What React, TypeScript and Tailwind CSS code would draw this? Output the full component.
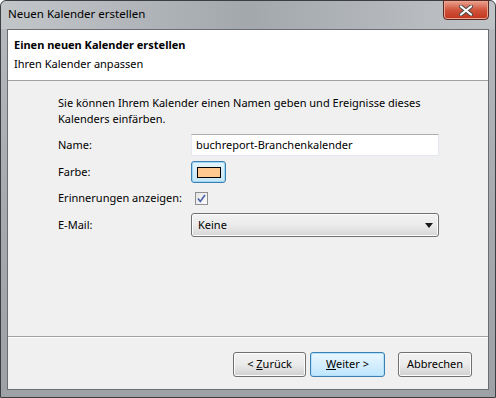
const font = "font-['Segoe_UI','Noto_Sans',sans-serif]";

const WinButton = ({
  children,
  focused,
  className = "",
}: {
  children: React.ReactNode;
  focused?: boolean;
  className?: string;
}) => (
  <button
    className={`h-[25px] rounded-[3px] border text-[11px] text-black ${
      focused
        ? "border-[#3c7fb1] bg-gradient-to-b from-[#eaf6fd] to-[#bee6fd] shadow-[inset_0_0_0_1px_#b4e0fa]"
        : "border-[#707070] bg-gradient-to-b from-[#f2f2f2] via-[#ebebeb] to-[#cfcfcf] shadow-[inset_0_0_0_1px_#fcfcfc]"
    } ${className}`}
  >
    {children}
  </button>
);

export default function App() {
  return (
    <div
      className={`w-[496px] h-[398px] flex flex-col rounded-t-[6px] border border-[#3b3f44] bg-gradient-to-b from-[#b7bbbf] via-[#a7abb0] to-[#9ea2a6] ${font}`}
    >
      {/* title bar */}
      <div className="h-[28px] relative flex items-center pl-[7px] bg-gradient-to-r from-[#c3c6c9] via-[#a3a8ad] to-[#c0c3c6] rounded-t-[6px]">
        <span className="text-[11.5px] text-black -mt-[2px]">
          Neuen Kalender erstellen
        </span>
        <div className="absolute right-[6px] top-[-1px] w-[46px] h-[20px] rounded-b-[4px] border border-[#5a2a24] bg-gradient-to-b from-[#e8a190] via-[#d0533a] to-[#c1351e] shadow-[inset_0_0_0_1px_#eba58f] flex items-center justify-center">
          <svg width="14" height="11" viewBox="0 0 14 11">
            <path
              d="M2 1.5 L12 9.5 M12 1.5 L2 9.5"
              stroke="#4a4a4a"
              strokeWidth="4"
              strokeLinecap="round"
            />
            <path
              d="M2 1.5 L12 9.5 M12 1.5 L2 9.5"
              stroke="#ffffff"
              strokeWidth="2.2"
              strokeLinecap="round"
            />
          </svg>
        </div>
      </div>

      {/* client area */}
      <div className="flex-1 mx-[6px] mb-[7px] border border-[#6a6e72] bg-[#f0f0f0] flex flex-col">
        <div className="h-[51px] bg-white border-b border-[#a0a0a0] pl-[6px] pt-[7px] text-[11px] text-black">
          <div className="font-bold leading-[16px]">
            Einen neuen Kalender erstellen
          </div>
          <div className="leading-[16px] mt-[3px]">Ihren Kalender anpassen</div>
        </div>

        <div className="flex-1 pl-[50px] pt-[14px] text-[11px] text-black">
          <p className="leading-[16px] w-[380px]">
            Sie können Ihrem Kalender einen Namen geben und Ereignisse dieses
            Kalenders einfärben.
          </p>
          <div className="grid grid-cols-[133px_248px] gap-y-[5px] mt-[7px] items-center">
            <span>Name:</span>
            <div className="h-[22px] bg-white border border-[#e3e9ef] border-t-[#abadb3] flex items-center px-[4px]">
              buchreport-Branchenkalender
            </div>

            <span>Farbe:</span>
            <div>
              <div className="w-[35px] h-[22px] rounded-[3px] border border-[#3c7fb1] bg-gradient-to-b from-[#e5f4fc] to-[#c4e5f6] shadow-[inset_0_0_0_1px_#9ed7f6] flex items-center justify-center">
                <div className="w-[24px] h-[11px] bg-[#ffc891] border border-black" />
              </div>
            </div>

            <span>Erinnerungen anzeigen:</span>
            <div className="h-[20px] flex items-center pl-[4px]">
              <div className="w-[13px] h-[13px] border border-[#8f8f8f] bg-gradient-to-br from-[#e6e6e6] to-[#fbfbfb] flex items-center justify-center">
                <svg width="9" height="9" viewBox="0 0 9 9">
                  <path
                    d="M1 4.5 L3.3 7.5 L8 1"
                    stroke="#4b61a8"
                    strokeWidth="1.6"
                    fill="none"
                  />
                </svg>
              </div>
            </div>

            <span>E-Mail:</span>
            <div className="h-[24px] rounded-[3px] border border-[#707070] bg-gradient-to-b from-[#f2f2f2] via-[#ebebeb] to-[#d6d6d6] shadow-[inset_0_0_0_1px_#fcfcfc] flex items-center justify-between pl-[6px] pr-[5px]">
              <span>Keine</span>
              <svg width="8" height="5" viewBox="0 0 8 5">
                <path d="M0 0 H8 L4 5 Z" fill="#1a1a1a" />
              </svg>
            </div>
          </div>
        </div>

        <div className="h-[53px] border-t border-[#a0a0a0] shadow-[inset_0_1px_0_#ffffff] flex items-center justify-end pr-[16px] pt-[2px]">
          <WinButton className="w-[73px]">
            &lt; <u>Z</u>urück
          </WinButton>
          <WinButton focused className="w-[75px] ml-[4px]">
            <u>W</u>eiter &gt;
          </WinButton>
          <WinButton className="w-[74px] ml-[13px]">Abbrechen</WinButton>
        </div>
      </div>
    </div>
  );
}
